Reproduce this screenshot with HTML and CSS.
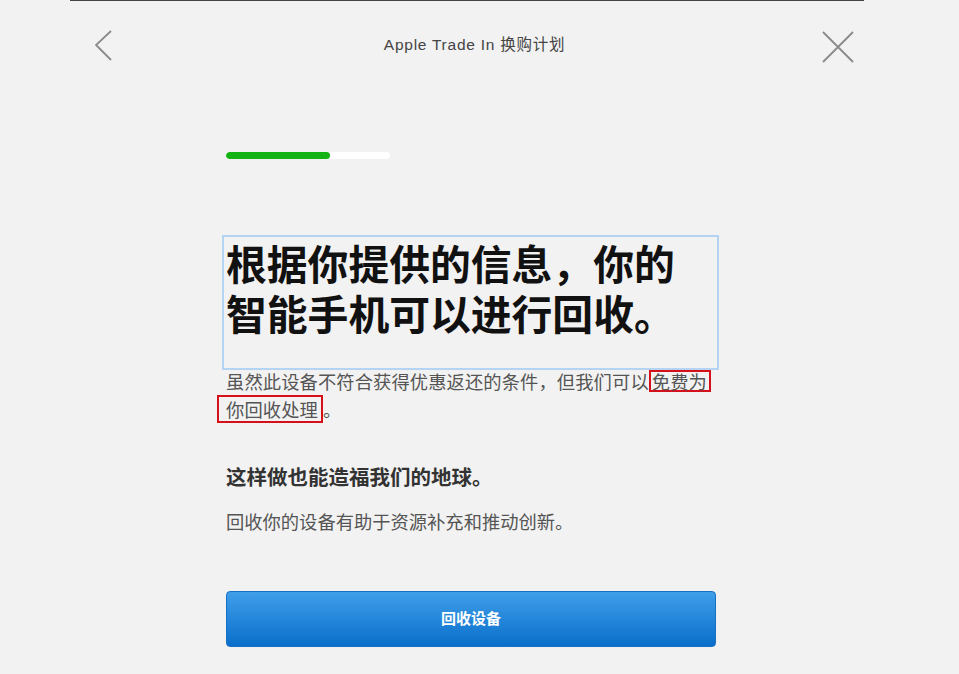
FILE: index.html
```html
<!DOCTYPE html>
<html lang="zh-CN">
<head>
<meta charset="utf-8">
<title>Apple Trade In 换购计划</title>
<link rel="stylesheet" href="styles.css">
</head>
<body>
<div class="topline"></div>
<header class="header">
  <button class="icon-btn back" aria-label="返回">
    <svg width="20" height="32" viewBox="0 0 20 32"><polyline points="16,1 1,15 16,30" fill="none" stroke="#8a8a8a" stroke-width="1.8"/></svg>
  </button>
  <div class="title">Apple Trade In 换购计划</div>
  <button class="icon-btn close" aria-label="关闭">
    <svg width="32" height="32" viewBox="0 0 32 32"><path d="M1 1 L31 31 M31 1 L1 31" fill="none" stroke="#8a8a8a" stroke-width="1.8"/></svg>
  </button>
</header>
<main class="content">
  <div class="progress"><div class="progress-fill"></div></div>
  <h1 class="headline">根据你提供的信息，你的智能手机可以进行回收。</h1>
  <p class="lead">虽然此设备不符合获得优惠返还的条件，但我们可以<span class="mark mark-a">免费为</span><span class="mark mark-b">你回收处理</span>。</p>
  <h2 class="subhead">这样做也能造福我们的地球。</h2>
  <p class="body">回收你的设备有助于资源补充和推动创新。</p>
  <button class="primary">回收设备</button>
</main>
</body>
</html>
```
FILE: styles.css
```css
html, body {
  margin: 0;
  padding: 0;
  background: #f2f2f2;
}
body {
  font-family: "Liberation Sans", "Noto Sans CJK SC", sans-serif;
  color: #333;
}
.topline {
  margin: 0 95px 0 70px;
  height: 1px;
  background: #444;
}
.header {
  height: 88px;
  display: grid;
  grid-template-columns: 1fr auto 1fr;
  align-items: center;
  padding: 0 105px 0 95px;
}
.icon-btn {
  background: none;
  border: 0;
  padding: 0;
  display: flex;
  cursor: pointer;
}
.back { justify-self: start; margin-top: 2px; }
.close { justify-self: end; margin-top: 3px; }
.title {
  font-size: 15.5px;
  letter-spacing: 0.75px;
  color: #444;
  margin-top: -4px;
}
.content {
  width: 490px;
  margin: 0 0 0 226px;
  display: flex;
  flex-direction: column;
  align-items: flex-start;
}
.progress {
  margin-top: 63px;
  width: 164px;
  height: 7px;
  border-radius: 4px;
  background: #ffffff;
  overflow: hidden;
}
.progress-fill {
  width: 104px;
  height: 100%;
  background: #12b312;
  border-radius: 4px;
}
.headline {
  align-self: stretch;
  margin: 76px -3px 0 -4px;
  padding: 1px 2px 30px 2px;
  border: 2px solid #b5d3f3;
  font-family: "Noto Sans CJK SC", sans-serif;
  font-weight: 700;
  font-size: 40.8px;
  line-height: 50px;
  color: #111;
}
.lead, .body {
  margin: 0;
  font-family: "Noto Sans CJK SC", sans-serif;
  font-size: 18.3px;
  line-height: 27px;
  color: #555;
}
.lead {
  margin-top: -2px;
  letter-spacing: 0.1px;
}
.mark {
  display: inline-block;
  border: 2px solid #d6101b;
}
.mark-a {
  line-height: 18px;
  padding: 0 2px 0 1px;
}
.mark-b {
  line-height: 24px;
  margin-left: -9px;
  padding: 0 3px 0 7px;
}
.subhead {
  margin: 39px 0 0;
  font-family: "Noto Sans CJK SC", sans-serif;
  font-weight: 700;
  font-size: 20.5px;
  line-height: 28px;
  color: #333;
}
.body {
  margin-top: 18px;
}
.primary {
  margin-top: 56px;
  width: 490px;
  height: 56px;
  padding: 0 0 3px;
  border: 1px solid #1670c4;
  border-radius: 4px;
  background: linear-gradient(#409ee9, #0a6fcb);
  color: #fff;
  font-family: "Noto Sans CJK SC", sans-serif;
  font-weight: 700;
  font-size: 15px;
  cursor: pointer;
}
```
